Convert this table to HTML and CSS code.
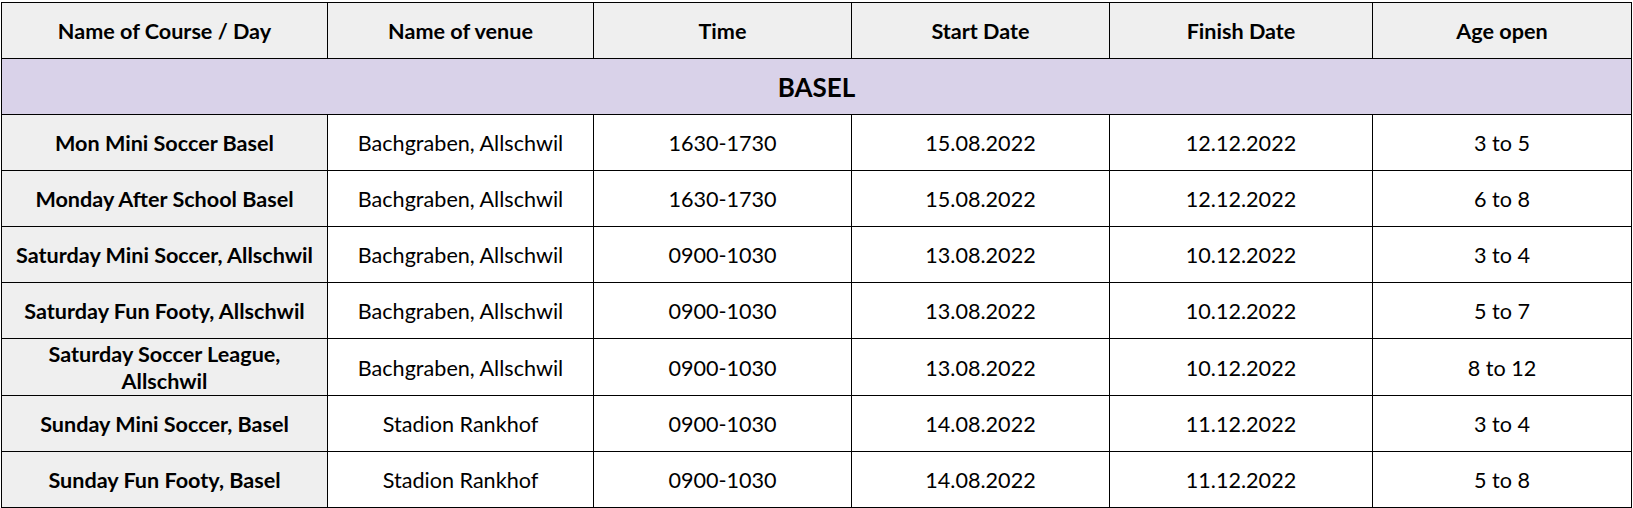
FILE: index.html
```html
<!DOCTYPE html>
<html>
<head>
<meta charset="utf-8">
<link rel="stylesheet" href="styles.css">
</head>
<body>
<table class="schedule">
  <colgroup>
    <col class="c1"><col class="c2"><col class="c3"><col class="c4"><col class="c5"><col class="c6">
  </colgroup>
  <thead>
    <tr class="head">
      <th>Name of Course / Day</th>
      <th>Name of venue</th>
      <th>Time</th>
      <th>Start Date</th>
      <th>Finish Date</th>
      <th>Age open</th>
    </tr>
  </thead>
  <tbody>
    <tr class="region"><td colspan="6">BASEL</td></tr>
    <tr><th>Mon Mini Soccer Basel</th><td>Bachgraben, Allschwil</td><td>1630-1730</td><td>15.08.2022</td><td>12.12.2022</td><td>3 to 5</td></tr>
    <tr><th>Monday After School Basel</th><td>Bachgraben, Allschwil</td><td>1630-1730</td><td>15.08.2022</td><td>12.12.2022</td><td>6 to 8</td></tr>
    <tr><th>Saturday Mini Soccer, Allschwil</th><td>Bachgraben, Allschwil</td><td>0900-1030</td><td>13.08.2022</td><td>10.12.2022</td><td>3 to 4</td></tr>
    <tr><th>Saturday Fun Footy, Allschwil</th><td>Bachgraben, Allschwil</td><td>0900-1030</td><td>13.08.2022</td><td>10.12.2022</td><td>5 to 7</td></tr>
    <tr><th>Saturday Soccer League,<br>Allschwil</th><td>Bachgraben, Allschwil</td><td>0900-1030</td><td>13.08.2022</td><td>10.12.2022</td><td>8 to 12</td></tr>
    <tr><th>Sunday Mini Soccer, Basel</th><td>Stadion Rankhof</td><td>0900-1030</td><td>14.08.2022</td><td>11.12.2022</td><td>3 to 4</td></tr>
    <tr><th>Sunday Fun Footy, Basel</th><td>Stadion Rankhof</td><td>0900-1030</td><td>14.08.2022</td><td>11.12.2022</td><td>5 to 8</td></tr>
  </tbody>
</table>
</body>
</html>
```
FILE: styles.css
```css
html, body {
  margin: 0;
  padding: 0;
  background: #ffffff;
}
body {
  padding: 2px 0 0 1px;
  font-family: Lato, "Open Sans", sans-serif;
  color: #000000;
}
.schedule {
  border-collapse: separate;
  border-spacing: 1px;
  background: #000000;
  table-layout: fixed;
  width: 1631px;
}
.c1 { width: 325px; }
.c2 { width: 265px; }
.c3 { width: 257px; }
.c4 { width: 257px; }
.c5 { width: 262px; }
.c6 { width: 258px; }
.schedule th,
.schedule td {
  height: 55px;
  padding: 2px 0 0 0;
  box-sizing: border-box;
  text-align: center;
  vertical-align: middle;
  font-size: 21.6px;
  line-height: 27px;
  background: #ffffff;
  font-weight: 400;
}
.schedule th {
  font-weight: 700;
  background: #efefef;
}
.schedule .head th {
  background: #efefef;
}
.schedule .region td {
  background: #d9d2e9;
  font-weight: 700;
  font-size: 26px;
}
```
